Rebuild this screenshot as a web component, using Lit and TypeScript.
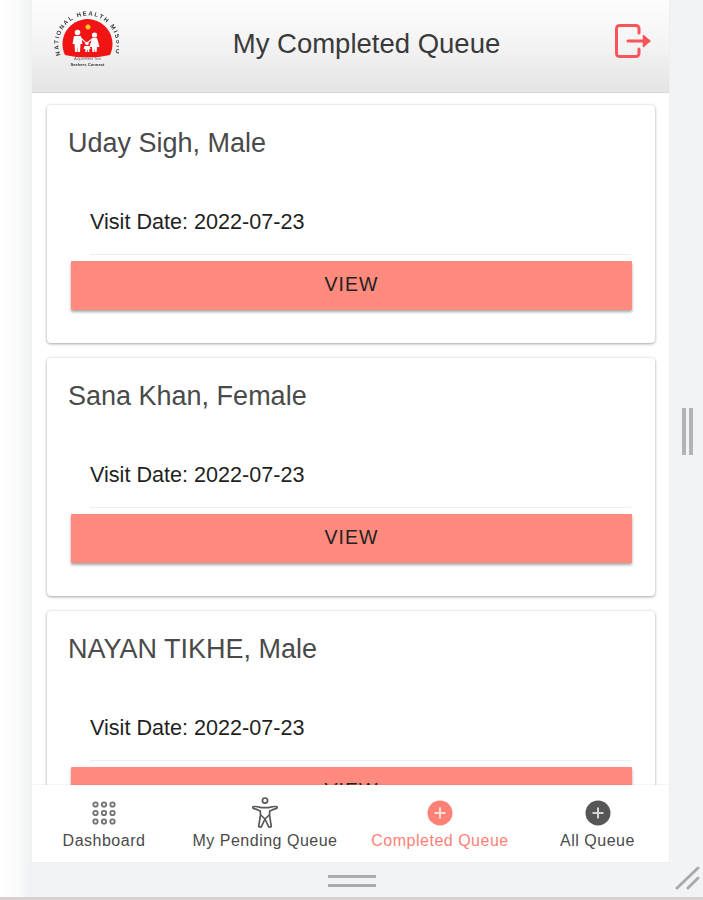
import { LitElement, html, css, svg } from "lit";
import { customElement } from "lit/decorators.js";

const patients = ["Uday Sigh, Male", "Sana Khan, Female", "NAYAN TIKHE, Male"];

const grid = svg`<svg width="26" height="26" viewBox="0 0 26 26" fill="none" stroke="#707070" stroke-width="1.800">
  ${[4.500, 13, 21.500].flatMap((y) => [4.500, 13, 21.500].map((x) => svg`<circle cx=${x} cy=${y} r="2.200"/>`))}
</svg>`;

const person = svg`<svg width="28" height="32" viewBox="0 0 28 32" fill="none" stroke="#585858" stroke-width="1.700" stroke-linejoin="round">
  <circle cx="14" cy="3.600" r="2.600"/>
  <path d="M2 9.800C5.500 8.800 8 10.200 10 10.600h8c2-.4 4.500-1.800 8-.8.500.8-.2 1.700-1 1.800-2.700.3-4.500 1.500-6.300 2.500l-.2 3.900 1.800 11.400c-.9 1-2 1-2.700.2L14 22l-3.600 7.600c-.7.800-1.800.8-2.700-.2l1.800-11.400-.2-3.900c-1.800-1-3.600-2.200-6.300-2.500-.8-.1-1.500-1-1-1.800z"/>
  <path d="M9.800 18 14 22l4.200-4"/>
</svg>`;

const plus = (bg: string) => svg`<svg width="26" height="26" viewBox="0 0 26 26">
  <circle cx="13" cy="13" r="12.500" fill=${bg}/>
  <path d="M13 7.500v11M7.500 13h11" stroke="#f4f4f4" stroke-width="2" opacity="0.8"/>
</svg>`;

const logo = svg`<svg width="66" height="66" viewBox="0 0 66 66">
  <defs><path id="arc" d="M7.500 47A29 29 0 1 1 61.500 47"/></defs>
  <path d="M12 47A25 25 0 1 1 57 47Q34.500 52 12 47z" fill="#f01414"/>
  <text font-family="Liberation Sans, sans-serif" font-size="6" font-weight="700" fill="#333" letter-spacing="1.500">
    <textPath href="#arc">NATIONAL HEALTH MISSION</textPath>
  </text>
  <circle cx="35" cy="19" r="2.500" fill="#fbc02d"/>
  <g fill="#fff">
    <circle cx="24.500" cy="24.500" r="2.800"/><path d="M21 28h7l1.500 8h-2l-.5 8h-2.200l-.3-6-.3 6h-2.200l-.5-8h-2z"/>
    <circle cx="41.500" cy="27" r="2.600"/><path d="M39 30h5l2.500 9H44l-.4 5h-1.800l-.3-4-.3 4h-1.800L39 39h-2.500z"/>
    <circle cx="34" cy="35.500" r="1.800"/><path d="M31.500 38h5l1 3h-1.200v3h-1.600v-2h-.8v2h-1.600v-3h-1.800z"/>
    <path d="M27.500 29l6 5.500 5.500-4 .6.800-6 4.600-6.800-6z"/>
  </g>
  <text x="34.500" y="51.500" text-anchor="middle" font-family="Liberation Sans, sans-serif" font-size="3.800" fill="#666">Adjustment Text</text>
  <text x="34.500" y="57.500" text-anchor="middle" font-family="Liberation Sans, sans-serif" font-size="4.200" font-weight="700" fill="#333">Seekers Connect</text>
</svg>`;

const logout = svg`<svg width="38" height="38" viewBox="0 0 38 38" fill="none" stroke="#f9545c" stroke-width="3" stroke-linecap="round" stroke-linejoin="round">
  <path d="M25 11V6.500a3 3 0 0 0-3-3H5.500a3 3 0 0 0-3 3v25a3 3 0 0 0 3 3H22a3 3 0 0 0 3-3V27"/>
  <path d="M14 19h21"/>
  <path d="M29.500 13.500 35.500 19l-6 5.500z" fill="#f9545c" stroke-width="1.500"/>
</svg>`;

@customElement("app-root")
export class AppRoot extends LitElement {
  static styles = css`
    :host {
      display: block;
      width: 703px;
      height: 900px;
      overflow: hidden;
      font-family: "Liberation Sans", Arial, sans-serif;
      background: #f1f3f4;
    }
    .frame {
      height: 897px;
      display: grid;
      grid-template-columns: 32px 637px 34px;
      grid-template-rows: 862px 35px;
      border-bottom: 3px solid #d9cfd0;
    }
    .left {
      grid-row: 1 / 3;
      background: linear-gradient(90deg, #ffffff 0%, #fafbfb 55%, #eff1f2 100%);
    }
    .phone {
      display: flex;
      flex-direction: column;
      overflow: hidden;
      background: #fff;
      box-shadow: 0 0 0 1px #eeeeee;
    }
    .right {
      display: flex;
      align-items: center;
      justify-content: center;
      gap: 3px;
      padding: 0 0 0 2px;
      box-sizing: border-box;
      height: 862px;
    }
    .grip-v {
      width: 4px;
      height: 47px;
      background: #b1b3b4;
    }
    .bottom {
      grid-column: 2 / 4;
      display: flex;
      justify-content: center;
      align-items: flex-start;
      position: relative;
      padding: 13px 0 0 0;
      box-sizing: border-box;
    }
    .grip-h {
      width: 48px;
      height: 12px;
      margin-left: -32px;
      border-top: 3px solid #a9abac;
      border-bottom: 3px solid #a9abac;
      box-sizing: border-box;
    }
    .resize {
      position: absolute;
      right: 2px;
      bottom: 6px;
    }
    header {
      flex: none;
      height: 93px;
      box-sizing: border-box;
      display: flex;
      align-items: center;
      justify-content: space-between;
      padding: 0 17px 10px 21px;
      background: linear-gradient(180deg, #fdfdfd 0%, #f3f3f3 50%, #e4e4e4 100%);
      border-bottom: 1px solid #d8d8d8;
    }
    header h1 {
      margin: 0;
      font-size: 27.500px;
      font-weight: 400;
      color: #3a3a3a;
      position: relative;
      top: 3px;
    }
    .logo {
      width: 66px;
      height: 66px;
      filter: blur(0.5px);
    }
    .icon-logout {
      width: 38px;
      height: 38px;
    }
    .list {
      flex: 1;
      min-height: 0;
      overflow: hidden;
      background: #fff;
      padding: 12px 14px 0 15px;
      display: flex;
      flex-direction: column;
      gap: 15px;
    }
    .card {
      flex: none;
      height: 238px;
      box-sizing: border-box;
      background: #fff;
      border-radius: 4px;
      box-shadow: 0 1px 3px rgba(0, 0, 0, 0.32), 0 0 3px rgba(0, 0, 0, 0.1);
      padding: 23px 24px 0 21px;
    }
    .name {
      font-size: 27px;
      line-height: 30px;
      color: #4a4a4a;
      font-weight: 400;
    }
    .visit {
      margin: 51px 0 0 22px;
      font-size: 21.600px;
      line-height: 26px;
      color: #1f1f1f;
      padding-bottom: 19px;
      border-bottom: 1px solid #eeeeee;
    }
    .view {
      display: block;
      width: 561px;
      height: 49px;
      margin: 6px 0 0 3px;
      padding: 0 0 2px 0;
      border: none;
      border-radius: 1px;
      background: #ff8a7d;
      color: #222;
      font: inherit;
      font-size: 19.500px;
      letter-spacing: 1px;
      box-shadow: 0 2px 3px rgba(0, 0, 0, 0.35);
    }
    nav {
      flex: none;
      height: 77px;
      background: #fff;
      display: grid;
      grid-template-columns: 144px 178px 172px 143px;
      box-shadow: 0 -1px 1px rgba(0, 0, 0, 0.04);
      position: relative;
    }
    .tab {
      display: flex;
      flex-direction: column;
      align-items: center;
      justify-content: flex-start;
      padding-top: 14px;
      color: #4a4a4a;
      font-size: 16px;
      line-height: 20px;
      letter-spacing: 0.500px;
      white-space: nowrap;
    }
    .tab svg {
      display: block;
    }
    .tab .ico {
      height: 28px;
      margin-bottom: 4px;
      display: flex;
      align-items: center;
      justify-content: center;
    }
    .tab.active {
      color: #ff7f74;
    }
  `;

  render() {
    return html`
      <div class="frame">
        <div class="left"></div>
        <div class="phone">
          <header>
            <div class="logo">${logo}</div>
            <h1>My Completed Queue</h1>
            <div class="icon-logout">${logout}</div>
          </header>
          <div class="list">
            ${patients.map(
              (p) => html`
                <div class="card">
                  <div class="name">${p}</div>
                  <div class="visit">Visit Date: 2022-07-23</div>
                  <button class="view">VIEW</button>
                </div>
              `
            )}
          </div>
          <nav>
            <div class="tab"><div class="ico">${grid}</div>Dashboard</div>
            <div class="tab"><div class="ico">${person}</div>My Pending Queue</div>
            <div class="tab active"><div class="ico">${plus("#ff8175")}</div>Completed Queue</div>
            <div class="tab"><div class="ico">${plus("#565656")}</div>All Queue</div>
          </nav>
        </div>
        <div class="right"><div class="grip-v"></div><div class="grip-v"></div></div>
        <div class="bottom">
          <div class="grip-h"></div>
          <svg class="resize" width="26" height="26" viewBox="0 0 26 26" stroke="#a9abac" stroke-width="3" stroke-linecap="round">
            <path d="M2 23 23 3M13 23l10-10"/>
          </svg>
        </div>
      </div>
    `;
  }
}
